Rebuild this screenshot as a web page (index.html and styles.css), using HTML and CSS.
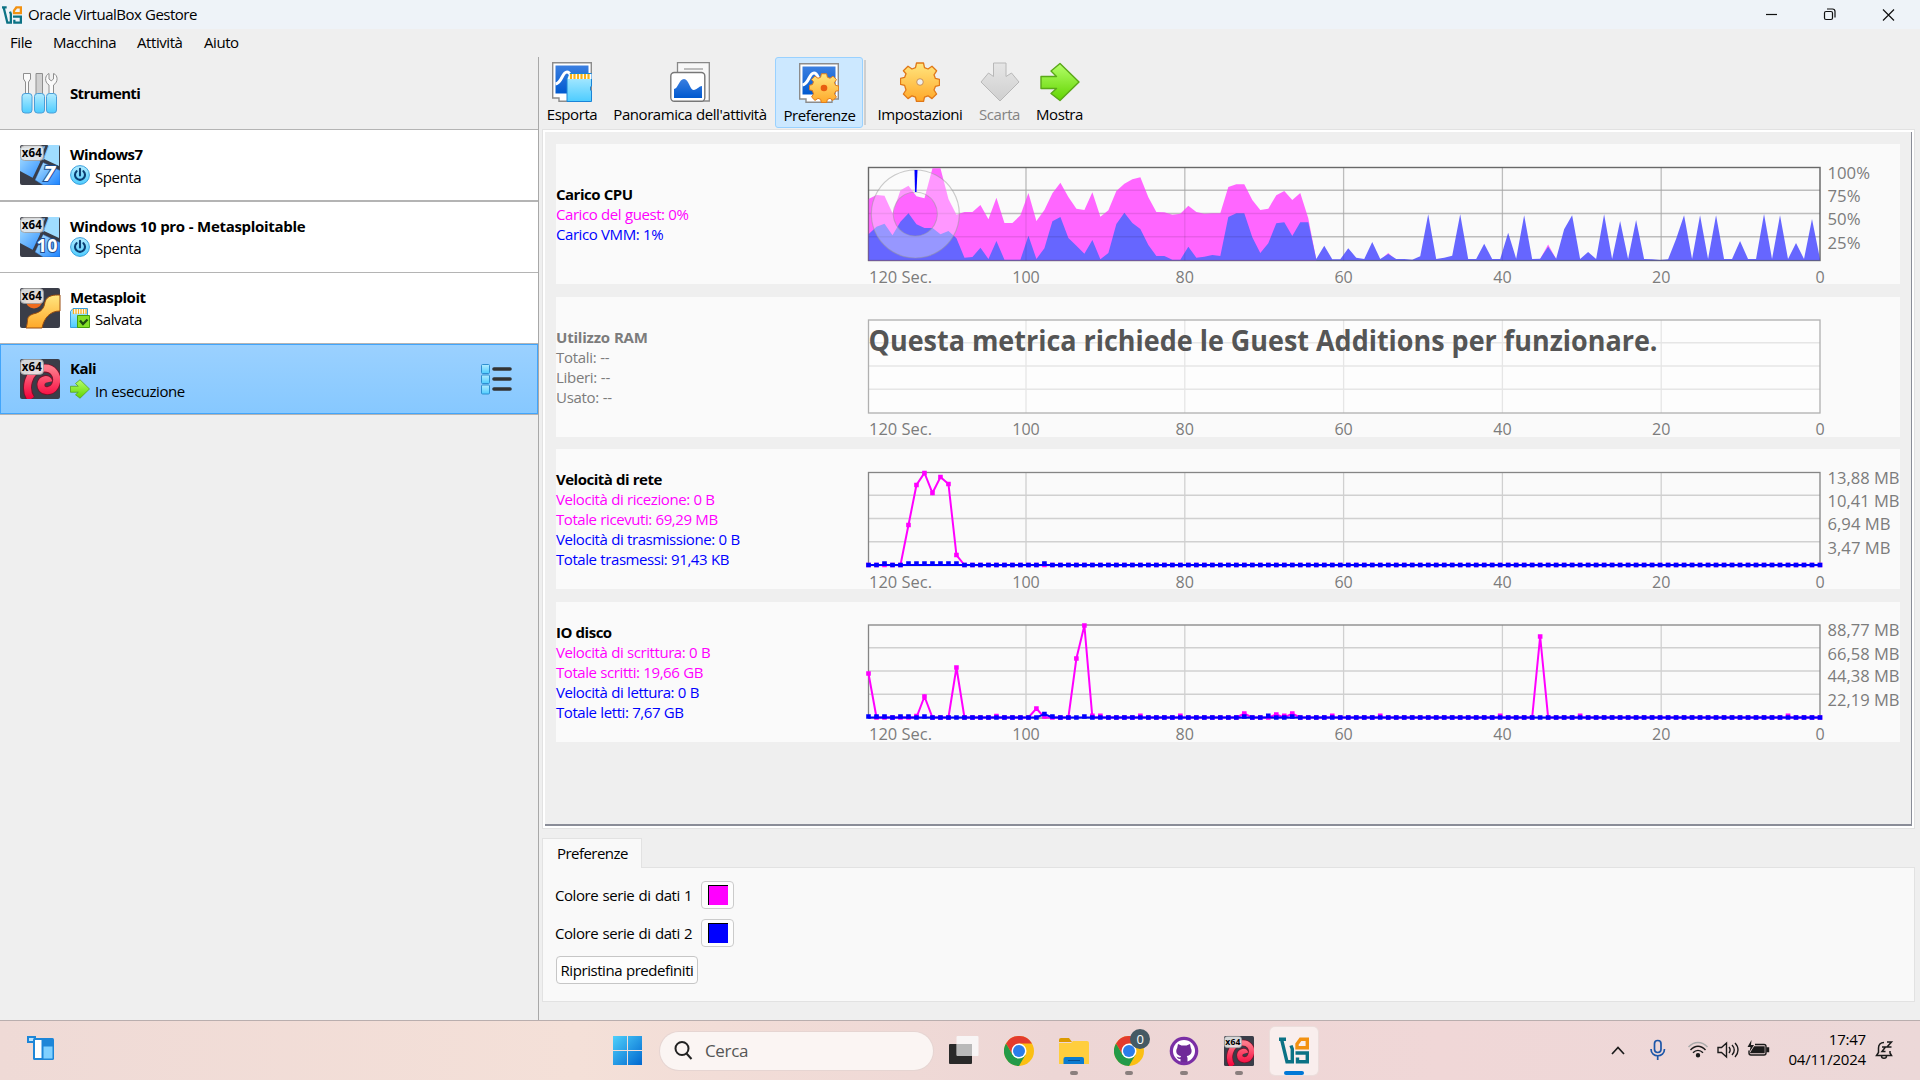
FILE: index.html
```html
<!DOCTYPE html>
<html lang="it">
<head>
<meta charset="utf-8">
<title>Oracle VirtualBox Gestore</title>
<link rel="stylesheet" href="styles.css">
</head>
<body>
<svg class="defs" width="0" height="0">
  <defs>
    <linearGradient id="gCyan" x1="0" y1="0" x2="0" y2="1"><stop offset="0" stop-color="#b4ecff"/><stop offset="1" stop-color="#4dccff"/></linearGradient>
    <linearGradient id="gBlue" x1="0" y1="0" x2="0" y2="1"><stop offset="0" stop-color="#3b7fe0"/><stop offset="1" stop-color="#0059cf"/></linearGradient>
    <linearGradient id="gGold" x1="0" y1="0" x2="0" y2="1"><stop offset="0" stop-color="#ffe680"/><stop offset="1" stop-color="#ffa829"/></linearGradient>
    <linearGradient id="gGreen" x1="0" y1="0" x2="0" y2="1"><stop offset="0" stop-color="#b4ff6a"/><stop offset="1" stop-color="#62d400"/></linearGradient>
    <linearGradient id="gGrey" x1="0" y1="0" x2="0" y2="1"><stop offset="0" stop-color="#e6e6e6"/><stop offset="1" stop-color="#cfcfcf"/></linearGradient>
    <linearGradient id="gWin" x1="0" y1="0" x2="1" y2="1"><stop offset="0" stop-color="#4fd0fb"/><stop offset="1" stop-color="#0067cf"/></linearGradient>
    <linearGradient id="gRed" x1="0" y1="0" x2="0" y2="1"><stop offset="0" stop-color="#ff7a8a"/><stop offset="1" stop-color="#f5003a"/></linearGradient>
    <linearGradient id="gPane" x1="0" y1="0" x2="1" y2="1"><stop offset="0" stop-color="#b8e8ff"/><stop offset="1" stop-color="#1a82ff"/></linearGradient>
  </defs>
  <symbol id="vbox" viewBox="0 0 30 26">
    <g fill="none" stroke-width="3.4">
      <path d="M0 1.700H7M2.500 1.700L8 24.300H13.300V11.500L12 8" stroke="#0b7285"/>
      <path d="M16.500 15.500H28.300V24.300H18.500V20" stroke="#0b7285"/>
      <path d="M18 10.300V6.500L21.500 1.700H28.300V10.300z" stroke="#f29111"/>
    </g>
  </symbol>
  <symbol id="windows-os" viewBox="0 0 40 40">
    <rect width="40" height="40" rx="2" fill="#3a3d48"/>
    <path d="M27 0H39v21L24 14z" fill="#9fdcff"/>
    <path d="M0 3V26L13 33 24 14 29 1z" fill="url(#gPane)"/>
    <path d="M27 0L21 15.500 40 25" fill="none" stroke="#3a3d48" stroke-width="2.500"/>
    <path d="M23 17.500L40 25.500V40H23L15 35z" fill="url(#gPane)" stroke="#2a60b0" stroke-width=".5"/>
    <path d="M22 16L13 35" stroke="#3a3d48" stroke-width="2.500"/>
  </symbol>
  <symbol id="kali-os" viewBox="0 0 40 40">
    <rect width="40" height="40" rx="2" fill="#3a3d48"/>
    <path d="M11 40C4 30 8 12 21 9.500C33 7 40 17 35 27C31 34 20 33 21 25C22 20 28 19 29 23" fill="none" stroke="#7a1028" stroke-width="8.800"/>
    <path d="M11 40C4 30 8 12 21 9.500C33 7 40 17 35 27C31 34 20 33 21 25C22 20 28 19 29 23" fill="none" stroke="url(#gRed)" stroke-width="7"/>
  </symbol>
  <symbol id="power" viewBox="0 0 20 20">
    <circle cx="10" cy="10" r="9.4" fill="url(#gCyan)" stroke="#3a9fdc"/>
    <path d="M6.6 6.2A5 5 0 1 0 13.4 6.2M10 3.8V10.4" fill="none" stroke="#0b3e73" stroke-width="2.1" stroke-linecap="round"/>
  </symbol>
  <symbol id="arrow" viewBox="0 0 40 40">
    <path d="M1 14.5H16.5L11 9 20 1.5 39 20 20 38.5 11 31.500 16.500 26.500H1z" stroke-width="1.4" stroke-linejoin="round"/>
  </symbol>
  <symbol id="gear" viewBox="0 0 40 40">
    <path d="M16.500 1h7l1 4.600 3.500 1.400 4-2.800 4.600 4.600-2.600 4 1.400 3.600 4.100 1v6l-4.100 1-1.400 3.600 2.600 4-4.600 4.600-4-2.800-3.500 1.400-1 4.300h-7l-1-4.300-3.500-1.400-4 2.800-4.600-4.600 2.600-4L4.600 23.400.5 22.400v-6l4.100-1L6 11.800 3.400 8.800 8 4.200l4 2.800 3.500-1.400z" fill="url(#gGold)" stroke="#e07818" stroke-width="1.300" stroke-linejoin="round"/>
  </symbol>
  <symbol id="graph" viewBox="0 0 40 40">
    <path d="M.7.7H39.300V36H33V39.300H7V36H.7z" fill="#fff" stroke="#8c8c8c" stroke-width="1.400"/>
    <rect x="3.500" y="3.500" width="33" height="28" fill="url(#gBlue)"/>
    <path d="M3.500 22C10 21 10 10 15 10S19 21 26 20" fill="none" stroke="#fff" stroke-width="3"/>
  </symbol>
  <symbol id="chrome" viewBox="0 0 30 30">
    <circle cx="15" cy="15" r="15" fill="#fbbf12"/>
    <path d="M2 7.500A15 15 0 0 1 28 7.500H15L8.500 18.800z" fill="#e33b2e"/>
    <path d="M2 7.500A15 15 0 0 0 15 30L21.500 18.800 8.500 18.800z" fill="#249a48"/>
    <circle cx="15" cy="15" r="7.500" fill="#fff"/><circle cx="15" cy="15" r="6" fill="#2b7de9"/>
  </symbol>
</svg>

<header class="titlebar">
  <svg class="app-icon" width="20" height="18"><use href="#vbox"/></svg>
  <span class="title">Oracle VirtualBox Gestore</span>
  <svg class="winctl" width="140" height="28" fill="none" stroke="#111" stroke-width="1.200">
    <path d="M6 13.500H17"/>
    <rect x="64.500" y="10.500" width="8" height="8" rx="1.500"/><path d="M67 8h5.500a2.500 2.500 0 0 1 2.500 2.500v6"/>
    <path d="M123 8.500l11 11M134 8.500L123 19.500"/>
  </svg>
</header>
<nav class="menubar"><span class="m1">File</span><span class="m2">Macchina</span><span class="m3">Attività</span><span class="m4">Aiuto</span></nav>

<div class="main">
  <aside class="sidebar">
    <div class="tools">
      <svg width="38" height="42" viewBox="0 0 38 42">
        <g fill="#fafafa" stroke="#8e8e8e"><path d="M2.500 1.500H9.500V7L7.500 10V22H4.500V10L2.500 7z"/><path d="M15 1.500h6.500V22H15z" fill="#d0d0d0"/><path d="M28 22V13C23 10 24 3 28 1.500V7l2.200 1.800L32.500 7V1.500C37 3 37.500 10 32.500 13V22z"/></g>
        <g fill="url(#gCyan)" stroke="#4a9ed8"><rect x="1" y="21.500" width="10" height="19.500" rx="3"/><rect x="13.500" y="21.500" width="10" height="19.500" rx="3"/><rect x="25.500" y="21.500" width="10" height="19.500" rx="3"/></g>
      </svg>
      <b>Strumenti</b>
    </div>
    <div class="vm vm1">
      <svg class="os" width="40" height="40"><use href="#windows-os"/><text x="23" y="36" class="osnum seven">7</text><rect class="b64bg" x=".5" y=".5" width="23" height="15" rx="4"/><text class="b64" x="1.800" y="12.400" textLength="20">x64</text></svg>
      <div class="info"><b>Windows7</b><div class="state"><svg width="20" height="20"><use href="#power"/></svg><span>Spenta</span></div></div>
    </div>
    <div class="vm vm2">
      <svg class="os" width="40" height="40"><use href="#windows-os"/><text x="16.500" y="34.500" class="osnum" textLength="21">10</text><rect class="b64bg" x=".5" y=".5" width="23" height="15" rx="4"/><text class="b64" x="1.800" y="12.400" textLength="20">x64</text></svg>
      <div class="info"><b class="long">Windows 10 pro - Metasploitable</b><div class="state"><svg width="20" height="20"><use href="#power"/></svg><span>Spenta</span></div></div>
    </div>
    <div class="vm vm3">
      <svg class="os" width="40" height="40" viewBox="0 0 40 40"><rect width="40" height="40" rx="2" fill="#3a3d48"/><circle cx="14" cy="12" r="8.500" fill="#f06a1c"/><path d="M6 40C9 32 5 29 13 26 22 24 24 20 25 14 27 7 34 7 40 7V23C30 23 24 30 22 40z" fill="url(#gGold)" stroke="#9a4d10"/><rect class="b64bg" x=".5" y=".5" width="23" height="15" rx="4"/><text class="b64" x="1.800" y="12.400" textLength="20">x64</text></svg>
      <div class="info"><b>Metasploit</b><div class="state">
        <svg width="20" height="20" viewBox="0 0 20 20"><path d="M.5 3.500L3 .500H17.500V19.500H.500z" fill="url(#gCyan)" stroke="#3a9fdc"/><path d="M3.500 1h13v4.500h-13z" fill="#fff"/><path d="M3.500 1v5M6 1v5M8.500 1v5M11 1v5M13.500 1v5M16 1v5" stroke="#f7b020" stroke-width="1.300"/><path d="M7.500 7.500h12v12h-12z" fill="#84e028" stroke="#45a00a"/><path d="M10 12.500l3 3.500 4.500-4.500" stroke="#1f4d10" stroke-width="2.300" fill="none"/></svg>
        <span>Salvata</span></div></div>
    </div>
    <div class="vm vm4 selected">
      <svg class="os" width="40" height="40"><use href="#kali-os"/><rect class="b64bg" x=".5" y=".5" width="23" height="15" rx="4"/><text class="b64" x="1.800" y="12.400" textLength="20">x64</text></svg>
      <div class="info"><b>Kali</b><div class="state"><svg width="20" height="20" fill="url(#gGreen)" stroke="#4d9a10"><use href="#arrow"/></svg><span>In esecuzione</span></div></div>
      <svg class="list" width="31" height="31" viewBox="0 0 31 31"><g fill="url(#gCyan)" stroke="#2f8fd0"><rect x=".5" y=".5" width="8" height="9" rx="1"/><rect x=".5" y="11" width="8" height="8.500" rx="1"/><rect x=".5" y="21" width="8" height="9" rx="1"/></g><path d="M13 5H29M13 15H29M13 25H29" stroke="#333" stroke-width="3.600" stroke-linecap="round"/></svg>
    </div>
  </aside>

  <section class="content">
    <div class="toolbar">
      <div class="tb t1"><svg width="40" height="40" viewBox="0 0 40 40"><use href="#graph"/><path d="M15 39.500V16L18 11.500H39.500V24l-1 1v3l1 1V39.500z" fill="url(#gCyan)" stroke="#1a84d8"/><path d="M17 12h22.500v5H16z" fill="#fff"/><path d="M19 12v5M22.500 12v5M26 12v5M29.500 12v5M33 12v5M36.500 12v5" stroke="#f9b115" stroke-width="2.200"/></svg><span>Esporta</span></div>
      <div class="tb t2"><svg width="40" height="40" viewBox="0 0 40 40"><path d="M7.500.7H39.300V39H7.500z" fill="#f8f8f8" stroke="#888" stroke-width="1.300"/><path d="M14 7H33" stroke="#aaa" stroke-width="1.500"/><rect x=".8" y="10.500" width="34" height="28.800" rx="3.500" fill="#fff" stroke="#777" stroke-width="1.400"/><path d="M4 36V27C8 27 9 17 14 17S20 29 24 28 29 24 32 24V36z" fill="url(#gBlue)"/></svg><span>Panoramica dell'attività</span></div>
      <div class="tb t3 active"><svg width="40" height="40" viewBox="0 0 40 40"><use href="#graph"/><svg x="10" y="10" width="30" height="30"><use href="#gear"/><circle cx="15" cy="15" r="3.300" fill="#e85d10"/></svg></svg><span>Preferenze</span></div>
      <div class="tb t4"><svg width="40" height="40"><use href="#gear"/><circle cx="20" cy="20" r="3.300" fill="#efefef" stroke="#c89058"/></svg><span>Impostazioni</span></div>
      <div class="tb t5 off"><svg width="40" height="40" viewBox="0 0 40 40" fill="url(#gGrey)" stroke="#b8b8b8"><path d="M13.500 1H26V14.500L31.500 11 39 20 20 39 1 20 8.500 11 13.500 14.500z"/></svg><span>Scarta</span></div>
      <div class="tb t6"><svg width="40" height="40" fill="url(#gGreen)" stroke="#5aa818"><use href="#arrow"/></svg><span>Mostra</span></div>
    </div>

    <div class="panel">
      <div class="card">
        <div class="stats"><b>Carico CPU</b><span class="c1">Carico del guest: 0%</span><span class="c2">Carico VMM: 1%</span></div>
        <svg class="chart" id="cpu" width="1040" height="140"></svg>
      </div>
      <div class="card disabled">
        <div class="stats"><b>Utilizzo RAM</b><span>Totali: --</span><span>Liberi: --</span><span>Usato: --</span></div>
        <svg class="chart" id="ram" width="1040" height="140" viewBox="0 .5 1040 140"></svg>
      </div>
      <div class="card third">
        <div class="stats"><b>Velocità di rete</b><span class="c1">Velocità di ricezione: 0 B</span><span class="c1">Totale ricevuti: 69,29 MB</span><span class="c2">Velocità di trasmissione: 0 B</span><span class="c2">Totale trasmessi: 91,43 KB</span></div>
        <svg class="chart" id="net" width="1040" height="140"></svg>
      </div>
      <div class="card">
        <div class="stats"><b>IO disco</b><span class="c1">Velocità di scrittura: 0 B</span><span class="c1">Totale scritti: 19,66 GB</span><span class="c2">Velocità di lettura: 0 B</span><span class="c2">Totale letti: 7,67 GB</span></div>
        <svg class="chart" id="disk" width="1040" height="140" viewBox="0 .5 1040 140"></svg>
      </div>
    </div>

    <div class="tab">Preferenze</div>
    <div class="prefs">
      <div class="pref"><span>Colore serie di dati 1</span><div class="swatch"><i class="pink"></i></div></div>
      <div class="pref"><span>Colore serie di dati 2</span><div class="swatch"><i class="blue"></i></div></div>
      <div class="reset">Ripristina predefiniti</div>
    </div>
  </section>
</div>

<footer class="taskbar">
  <svg class="widgets" width="28" height="28" viewBox="0 0 28 28"><path d="M0 1H9V8H0z" fill="#1d86d8"/><path d="M2 3H7V6H2z" fill="#bfe3fa"/><rect x="6" y="3" width="21" height="22" rx="1.500" fill="#1d86d8"/><rect x="8" y="5" width="6.500" height="18" fill="#fff"/><rect x="16.500" y="11.500" width="9" height="12" fill="#7fd0ff"/></svg>
  <svg class="start" width="29" height="29" viewBox="0 0 29 29"><path d="M0 0H14V14H0zM15 0H29V14H15zM0 15H14V29H0zM15 15H29V29H15z" fill="url(#gWin)"/></svg>
  <div class="search"><svg width="19" height="19" viewBox="0 0 19 19" fill="none" stroke="#222" stroke-width="2"><circle cx="8" cy="7.500" r="6.500"/><path d="M12.500 12.500L17.500 18"/></svg><span>Cerca</span></div>
  <svg class="taskview" width="30" height="29" viewBox="0 0 30 29"><rect x="0" y="8" width="23" height="20" rx="1" fill="#292929"/><rect x="7.500" y="0" width="22" height="20" rx="1" fill="#f8f8f8" fill-opacity=".9"/><path d="M8 8h15v12H8z" fill="#b9b9b9"/></svg>
  <div class="app"><svg width="30" height="30"><use href="#chrome"/></svg></div>
  <div class="app run"><svg width="30" height="30" viewBox="0 0 30 30"><path d="M0 4a2 2 0 0 1 2-2H10l3 4H0z" fill="#dc9a00"/><path d="M0 7H12l2-2H28a2 2 0 0 1 2 2V28H0z" fill="#ffce3d"/><path d="M4.500 28V23a2 2 0 0 1 2-2H23a2 2 0 0 1 2 2V28z" fill="#0b7bd0"/><path d="M9 24.500H21" stroke="#064f90"/></svg></div>
  <div class="app run"><svg width="30" height="30"><use href="#chrome"/></svg><em>0</em></div>
  <div class="app run"><svg width="30" height="30" viewBox="0 0 30 30"><circle cx="15" cy="15" r="14.300" fill="#7a2fa5"/><circle cx="15" cy="15" r="11" fill="#fff"/><path d="M9 8l3.500 1.500h5L21 8l.8 4c2 3.500.2 7.500-4 8l.7 2V26h-7V23c-3 .5-3-2-4.500-2.500 2 0 2.200 1.500 4.500.8l.5-1.300c-4.200-.5-6-4.500-3.800-8z" fill="#6f2b98"/></svg></div>
  <div class="app run"><svg width="30" height="30" viewBox="0 0 40 40"><use href="#kali-os"/><rect class="b64bg" x=".5" y=".5" width="23" height="15" rx="4"/><text class="b64" x="1.800" y="12.400" textLength="20">x64</text></svg></div>
  <div class="app tile"><svg width="30" height="27"><use href="#vbox"/></svg></div>

  <svg class="tray" width="170" height="30" viewBox="0 0 170 30" fill="none" stroke="#1b1b1b" stroke-width="1.400">
    <path d="M6 18L12 11.500 18 18" stroke-width="1.700"/>
    <g stroke="#1c56a8" stroke-width="1.700"><rect x="48.500" y="4.500" width="6.500" height="12" rx="3.200"/><path d="M45 13c0 9 13.500 9 13.500 0M51.700 20V24"/></g>
    <path d="M82.500 11C88 5 96 5 101.500 11" stroke="#aaa"/><path d="M84.500 14C89 9 95 9 99.500 14M87 16.800c3-3.300 7-3.300 10 0"/><circle cx="92" cy="19.200" r="1.500" fill="#1b1b1b"/>
    <path d="M112 11.500h3.500l5-4.500V21l-5-4.500h-3.500zM123 11c1.500 2 1.500 4 0 6M126 9c3 3 3 7 0 10M129 7c4 4 4 10 0 14"/>
    <path d="M149 8.500h9a2 2 0 0 1 2 2V17a2 2 0 0 1-2 2H145a2 2 0 0 1-2-2V14.500"/><path d="M148.500 11h9.500V16.500H145zM161 12h1.500v3.500h-1.500z" fill="#1b1b1b"/><path d="M145.500 4l-4 7h3l-1 5 4.500-7h-3z" fill="#1b1b1b" stroke="none"/>
  </svg>
  <div class="clock"><span>17:47</span><span>04/11/2024</span></div>
  <svg class="bell" width="20" height="20" viewBox="0 0 20 20" fill="none" stroke="#1b1b1b" stroke-width="1.500"><path d="M9 2.500C5.500 2.500 3.500 5 3.500 8V12.500L1.500 15.500H16.500L15 13V11M6.500 16c0 3 5 3 5 0M7 7H10.500L7 11.500H10.500M12 2h4.500L12 7h4.500"/></svg>
</footer>
<script src="charts.js"></script>
</body>
</html>
```
FILE: styles.css
```css
* { box-sizing: border-box; }
body {
  margin: 0;
  width: 1920px;
  height: 1080px;
  overflow: hidden;
  display: flex;
  flex-direction: column;
  background: #efefef;
  color: #000;
  font: 15px/20px "Open Sans", "Noto Sans", sans-serif;
  letter-spacing: -.43px;
  word-spacing: .3px;
}
svg { display: block; flex: none; overflow: visible; }
svg text { letter-spacing: 0; word-spacing: 0; }
.defs { position: absolute; }
b { font-weight: 700; letter-spacing: -.5px; }
b.long { letter-spacing: -.31px; }

.titlebar { height: 29px; flex: none; display: flex; align-items: center; background: #eef3f8; padding-left: 2px; }
.title { margin-left: 6px; padding-bottom: 1px; flex: 1; letter-spacing: -.5px; }
.winctl { margin-right: 20px; }

.menubar { height: 28px; flex: none; display: flex; padding: 3px 0 0 10px; }
.m1 { width: 43px; }
.m2 { width: 84px; }
.m3 { width: 67px; }

.main { flex: 1; display: flex; min-height: 0; }

.sidebar { width: 539px; flex: none; border-right: 1px solid #a8a8a8; }
.tools { height: 73px; display: flex; align-items: center; padding-left: 21px; gap: 11px; border-bottom: 1px solid #b4b4b4; }
.tools b { letter-spacing: -.65px; }
.vm { display: flex; padding-left: 20px; background: #fff; border-bottom: 1px solid #b4b4b4; }
.vm .os { margin-top: 15px; }
.info { margin: 14px 0 0 10px; flex: 1; }
.info b { display: block; }
.state { display: flex; align-items: center; gap: 5px; margin-top: 1px; height: 20px; }
.state span { padding-top: 1px; }
.vm1 { height: 72px; border-bottom-width: 2px; }
.vm1 .state span { padding-top: 4px; }
.vm2 { height: 71px; }
.vm3 { height: 71px; }
.vm4 { height: 71px; }
.vm4 .state span { padding-top: 3px; }
.selected { background: linear-gradient(#9bd1ff, #86c8ff); border: 1px solid #b4b4b4; border-width: 0 0 1px; box-shadow: inset 0 0 0 1px #42a5fb; }
.list { margin: 20px 26px 0 0; }
.b64 { font: 700 11.500px "Open Sans", sans-serif; fill: #000; }
.b64bg { fill: #e8e8e8; fill-opacity: .9; stroke: #999; stroke-width: .8px; }
.osnum { font: 700 18px "Noto Sans", sans-serif; fill: #fff; stroke: #1d4c90; stroke-width: 2px; paint-order: stroke; }
.seven { font-style: italic; font-size: 22px; }

.content { flex: 1; min-width: 0; padding: 0 5px 0 3px; display: flex; flex-direction: column; }
.toolbar { height: 72px; flex: none; display: flex; }
.tb { display: flex; flex-direction: column; align-items: center; padding-top: 5px; height: 71px; white-space: nowrap; }
.tb span { margin-top: 2px; }
.t1 { width: 60px; }
.t2 { width: 176px; }
.t3 { width: 88px; margin-left: -3px; }
.t3 span { padding-left: 1px; }
.active { border: 1px solid #99d1ff; border-radius: 3px; background: #cce8ff; }
.t4 { width: 98px; margin-left: 8px; }
.t5 { width: 61px; }
.t6 { width: 59px; }
.off { color: #838383; }
.toolbar .t3 { position: relative; }
.toolbar .t3::after { content: ""; position: absolute; right: -4px; top: 2px; width: 2px; height: 65px; background: #cfcfcf; }

.panel { width: 1373px; height: 700px; flex: none; border: 1px solid #e2e2e2; box-shadow: inset 0 0 0 2px #fff, inset -3px -4px 0 #8a8d98; padding: 14px 0 0 13px; }
.card { width: 1344px; height: 140px; margin-bottom: 13px; background: #fafafa; display: flex; }
.third { margin-top: -1px; }
.stats { width: 304px; flex: none; display: flex; flex-direction: column; justify-content: center; }
.disabled { color: #7c7c7c; }
.disabled .stats { letter-spacing: -.3px; }
.disabled b { letter-spacing: -.2px; }
.c1 { color: #f0f; }
.c2 { color: #00f; }
.axis { font: 17px "Open Sans", sans-serif; fill: #7c7c7c; }
.notice { font: 700 28px "Open Sans", sans-serif; fill: #555; }

.tab { width: 100px; height: 30px; flex: none; margin-top: 9px; padding: 4px 0 0 14px; border: 1px solid #e2e2e2; border-bottom: 0; background: #f9f9f9; position: relative; z-index: 1; letter-spacing: -.55px; }
.prefs { width: 1373px; height: 135px; flex: none; margin-top: -1px; border: 1px solid #e2e2e2; background: #f9f9f9; padding: 13px 0 0 12px; }
.pref { display: flex; height: 28px; margin-bottom: 10px; align-items: center; }
.pref span { width: 146px; word-spacing: .8px; }
.swatch { width: 33px; height: 28px; border: 1px solid #cbcbcb; border-radius: 4px; background: #fdfdfd; padding: 3px 0 0 6px; }
.swatch i { display: block; width: 20px; height: 20px; border: 1px solid #000; border-width: 1px 0 0 1px; }
.pink { background: #f0f; }
.blue { background: #00f; }
.reset { width: 142px; height: 28px; margin: -1px 0 0 1px; padding: 3px 0; text-align: center; border: 1px solid #c6c6c6; border-radius: 4px; background: #fdfdfd; white-space: nowrap; }

.taskbar { height: 60px; flex: none; display: flex; align-items: center; border-top: 1px solid #b9aeae; background: linear-gradient(90deg, #efdad6, #f4e0d8 30%, #edd6d5 55%, #f0d7d7 75%, #ecd8d8); }
.widgets { margin: -4px 0 0 27px; }
.start { margin-left: 558px; }
.search { width: 273px; height: 38px; margin: 0 16px 0 18px; padding-left: 14px; display: flex; align-items: center; gap: 12px; border-radius: 19px; background: #fbf5f3; box-shadow: 0 0 0 1px #e6d5d2; font-size: 17px; letter-spacing: -.35px; color: #555; }
.app { width: 55px; height: 48px; display: flex; align-items: center; justify-content: center; position: relative; }
.taskview { margin-right: 12px; }
.run::after { content: ""; position: absolute; bottom: 0; left: 24px; width: 8px; height: 4px; border-radius: 2px; background: #8a7f7e; }
.app em { position: absolute; right: 6px; top: 2px; width: 20px; height: 20px; border-radius: 50%; background: #455a64; color: #fff; font: 13px/20px "Open Sans", sans-serif; text-align: center; }
.tile { width: 48px; margin-left: 4px; border-radius: 5px; background: #f9eeed; box-shadow: 0 0 0 1px #ecdedc; }
.tile::after { content: ""; position: absolute; bottom: 0; left: 14px; width: 20px; height: 4px; border-radius: 2px; background: #0078d7; }
.tray { margin-left: 288px; }
.clock { width: 90px; display: flex; flex-direction: column; align-items: flex-end; letter-spacing: -.2px; margin-top: -3px; }
.bell { margin: -2px 0 0 9px; }
```
FILE: charts.js
```js
const X0 = 8.5, X1 = 960, TOP = 23.5, BOTTOM = 116.5;
const STEP = (X1 - X0) / 119;
const px = i => +(X0 + i * STEP).toFixed(2);

function grid(line, frame) {
  let s = '';
  for (const y of [0.25, 0.5, 0.75]) s += `<path d="M${X0} ${TOP - 0.5 + 93 * y}H${X1}" stroke="${line}" stroke-width="1.3"/>`;
  for (let k = 1; k < 6; k++) s += `<path d="M${X1 - k * 158.8} ${TOP}V${BOTTOM}" stroke="${line}" stroke-width="1.3"/>`;
  return s + `<rect x="${X0}" y="${TOP}" width="${X1 - X0}" height="93" fill="none" stroke="${frame}" stroke-width="1.3"/>`;
}

function axes(labels) {
  let s = `<text class="axis" x="9" y="138.500" textLength="63" lengthAdjust="spacingAndGlyphs">120 Sec.</text>`;
  ['0', '20', '40', '60', '80', '100'].forEach((t, k) => {
    s += `<text class="axis" x="${X1 - k * 158.8}" y="138.500" text-anchor="middle" textLength="${t.length * 9.2}" lengthAdjust="spacingAndGlyphs">${t}</text>`;
  });
  const rows = [34.5, 58, 80.5, 104.5];
  labels.forEach(([t, w], k) => {
    s += `<text class="axis" x="967.500" y="${rows[k]}" textLength="${w}" lengthAdjust="spacingAndGlyphs">${t}</text>`;
  });
  return s;
}

/* CPU samples: vertical position in thirds of a pixel, 329 is the chart bottom */
const guest = [147,135,137,190,121,107,139,145,55,55,147,194,186,186,165,208,143,219,219,196,129,213,180,130,98,141,176,180,127,200,181,123,101,88,82,142,186,187,194,191,167,186,191,190,190,111,103,103,150,180,176,136,123,150,129,205,328];
const vmm = [253,230,221,256,215,190,223,234,234,253,243,265,323,321,293,327,273,329,329,329,257,327,295,214,201,264,287,311,270,328,309,222,188,219,237,285,318,318,329,329,290,323,320,315,318,201,190,190,262,309,280,220,217,258,217,217,327,287,328,328,295,323,327,276,327,312,327,327,329,319,193,327,323,317,193,327,327,281,327,327,248,326,196,327,326,290,326,238,196,327,306,327,193,327,213,327,210,327,328,330,328,267,196,327,196,327,196,327,327,273,327,327,192,327,196,327,279,327,207,327];
const area = (d, fill) => `<path fill="${fill}" d="M${X0} ${BOTTOM}` + d.map((v, i) => `L${px(i)} ${(6 + v / 3).toFixed(1)}`).join('') + `L${px(d.length - 1)} ${BOTTOM}z"/>`;

document.getElementById('cpu').innerHTML =
  grid('#d0d0d0', '#858585') + area(guest, '#ff66ff') +
  `<path d="M${px(64)} 116L${px(65)} 109L${px(66)} 116zM${px(84)} 115L${px(85)} 100.500L${px(86)} 115z" fill="#ff66ff"/>` +
  area(vmm, '#6666ff') + grid('rgba(0,0,0,.09)', 'rgba(60,60,60,.4)') +
  `<path d="M55.3 26a44 44 0 1 0 .01 0zM55.3 48a22 22 0 1 1-.01 0z" fill="#fff" fill-opacity=".32" stroke="#999" stroke-opacity=".5" stroke-width="1.2"/>` +
  `<path d="M54.500 26H57.500L56.500 48H55z" fill="#00f"/>` +
  axes([['100%', 42.5], ['75%', 33], ['50%', 33], ['25%', 33]]);

document.getElementById('ram').innerHTML =
  `<rect x="${X0}" y="${TOP}" width="${X1 - X0}" height="93" fill="#fdfdfd"/>` + grid('#e6e6e6', '#b0b0b0') +
  `<text class="notice" x="8.500" y="54" textLength="789" lengthAdjust="spacingAndGlyphs">Questa metrica richiede le Guest Additions per funzionare.</text>` + axes([]);

/* Line series; markers of non-zero samples sit at their own height */
function series(values, colour) {
  let d = '', dots = '';
  for (let i = 0; i < 120; i++) {
    const v = values[i] || 0;
    const y = BOTTOM - v - 0.5;
    d += (i ? 'L' : 'M') + px(i) + ' ' + (v < 2 ? BOTTOM - 0.5 : y);
    dots += `M${px(i) - 2.3} ${y - 2.3}h4.600v4.600h-4.600z`;
  }
  return `<path d="${d}" fill="none" stroke="${colour}" stroke-width="2"/><path d="${dots}" fill="${colour}"/>`;
}

document.getElementById('net').innerHTML = grid('#d0d0d0', '#858585') +
  series({5: 40, 6: 80, 7: 92, 8: 72, 9: 88, 10: 81, 11: 10}, '#ff00ff') +
  series({2: 1.4, 5: 1.4, 6: 1.4, 7: 1.4, 8: 1.4, 9: 1.4, 10: 1.4, 11: 1.4, 22: 1.4}, '#0000ff') +
  axes([['13,88 MB', 72], ['10,41 MB', 72], ['6,94 MB', 63], ['3,47 MB', 63]]);

document.getElementById('disk').innerHTML = grid('#d0d0d0', '#858585') +
  series({0: 44, 6: 1.5, 7: 21, 11: 50, 16: 1.5, 21: 9, 22: 1, 26: 59, 27: 92, 28: 1.8, 29: 1.8, 34: 1.8, 39: 1.8, 47: 4, 51: 3, 52: 1.8, 53: 4, 58: 1.8, 64: 1.8, 79: 1.8, 84: 81, 89: 1.8, 115: 1.8}, '#ff00ff') +
  series({0: 1, 1: 1, 2: 1, 4: 1, 5: 1, 7: 1, 22: 3.5, 23: 1, 27: 1, 47: 1, 50: 1.8, 53: 1}, '#0000ff') +
  axes([['88,77 MB', 72], ['66,58 MB', 72], ['44,38 MB', 72], ['22,19 MB', 72]]);
```
